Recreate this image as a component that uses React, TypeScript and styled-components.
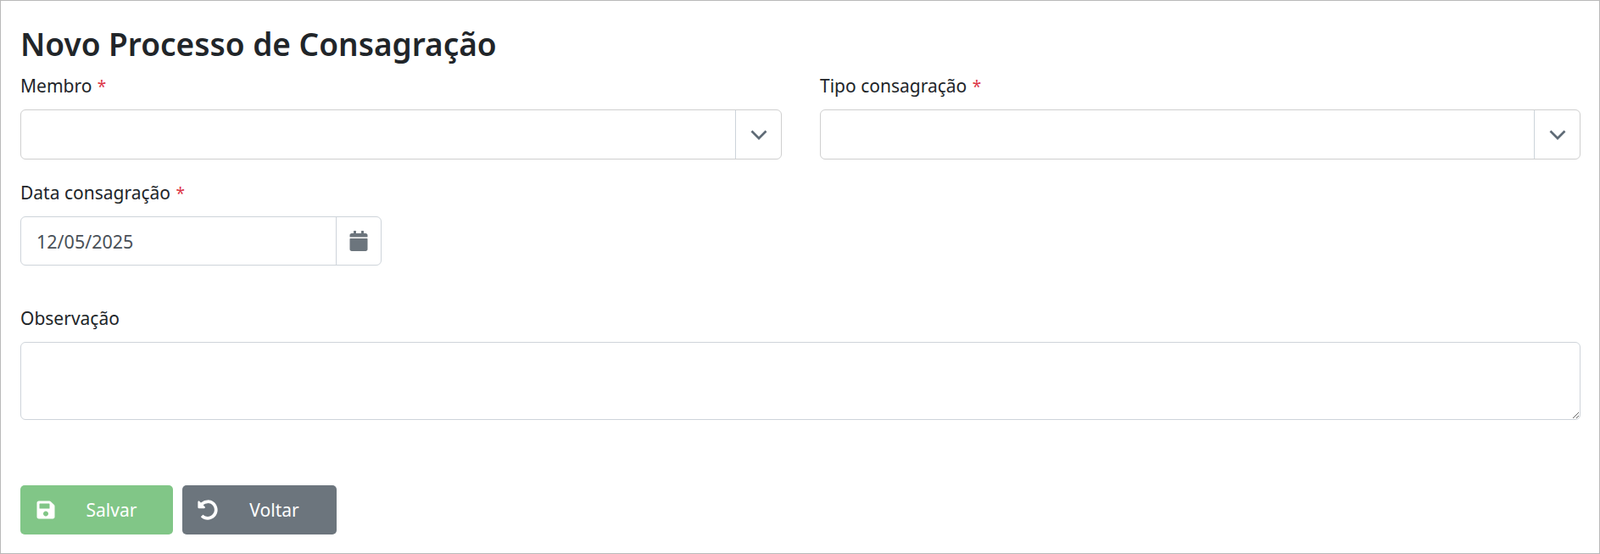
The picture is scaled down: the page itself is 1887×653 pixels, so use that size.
// App.tsx
import * as React from 'react';
import styled, { createGlobalStyle } from 'styled-components';
import { FaCalendar, FaSave, FaUndoAlt } from 'react-icons/fa';

const GlobalStyle = createGlobalStyle`
  * {
    box-sizing: border-box;
  }

  html,
  body {
    margin: 0;
    padding: 0;
    background: #fff;
  }

  body {
    font-family: 'Noto Sans', 'Open Sans', sans-serif;
    color: #212529;
  }
`;

const Page = styled.main`
  height: 653px;
  border: 1px solid #b9b9b9;
  padding: 30px 22px 0 23px;
`;

const Title = styled.h1`
  margin: 0;
  font-size: 37px;
  line-height: 41px;
  font-weight: 600;
  color: #212529;
`;

const TwoColumns = styled.div`
  display: grid;
  grid-template-columns: 898px 897px;
  justify-content: space-between;
  margin-top: 14px;
`;

const Field = styled.div<{ $width?: string; $top?: string }>`
  width: ${(p) => p.$width ?? 'auto'};
  margin-top: ${(p) => p.$top ?? '0'};
`;

const Label = styled.label`
  display: block;
  font-size: 21px;
  line-height: 30px;
  height: 30px;
  margin-bottom: 13px;
  color: #212529;
`;

const Required = styled.span`
  color: #dc3545;
  font-size: 19px;
  margin-left: 1px;
`;

const SelectBox = styled.div`
  display: flex;
  height: 59px;
  border: 1px solid #cfcfcf;
  border-radius: 6px;
  background: #fff;
`;

const SelectValue = styled.div`
  flex: 1;
`;

const SelectToggle = styled.div`
  width: 54px;
  display: flex;
  align-items: center;
  justify-content: center;
  border-left: 1px solid #ccd3da;
  color: #5f6b76;
`;

const DateBox = styled.div`
  display: flex;
  height: 58px;
  border: 1px solid #ced4da;
  border-radius: 6px;
  background: #fff;
`;

const DateInput = styled.input`
  flex: 1;
  min-width: 0;
  border: 0;
  outline: 0;
  background: transparent;
  padding: 0 18px;
  font-family: inherit;
  font-size: 21.5px;
  color: #495057;
`;

const DateButton = styled.div`
  width: 53px;
  display: flex;
  align-items: center;
  justify-content: center;
  border-left: 1px solid #ced4da;
  color: #6c757d;
  font-size: 24px;
`;

const TextArea = styled.textarea`
  display: block;
  width: 100%;
  height: 92px;
  border: 1px solid #ced4da;
  border-radius: 6px;
  outline: 0;
  padding: 8px 16px;
  font-family: inherit;
  font-size: 20px;
  color: #495057;
`;

const Actions = styled.div`
  display: flex;
  gap: 11px;
  margin-top: 77px;
`;

const ActionButton = styled.button<{ $bg: string; $width: string }>`
  display: flex;
  align-items: center;
  width: ${(p) => p.$width};
  height: 58px;
  padding: 0 18px;
  border: 0;
  border-radius: 5px;
  background: ${(p) => p.$bg};
  color: #fff;
  font-family: inherit;
  font-size: 21px;

  svg {
    font-size: 24px;
    flex: none;
  }

  span {
    flex: 1;
    text-align: center;
    padding-left: 11px;
  }
`;

const Chevron: React.FC = () => (
  <svg width="20" height="12" viewBox="0 0 20 12" fill="none" aria-hidden="true">
    <path d="M1.5 1.5 10 10l8.5-8.5" stroke="currentColor" strokeWidth="2.7" />
  </svg>
);

export default function App() {
  return (
    <>
      <GlobalStyle />
      <Page>
        <Title>Novo Processo de Consagração</Title>
        <TwoColumns>
          <Field>
            <Label>
              Membro <Required>*</Required>
            </Label>
            <SelectBox>
              <SelectValue />
              <SelectToggle>
                <Chevron />
              </SelectToggle>
            </SelectBox>
          </Field>
          <Field>
            <Label>
              Tipo consagração <Required>*</Required>
            </Label>
            <SelectBox>
              <SelectValue />
              <SelectToggle>
                <Chevron />
              </SelectToggle>
            </SelectBox>
          </Field>
        </TwoColumns>
        <Field $width="426px" $top="24px">
          <Label>
            Data consagração <Required>*</Required>
          </Label>
          <DateBox>
            <DateInput readOnly value="12/05/2025" />
            <DateButton>
              <FaCalendar />
            </DateButton>
          </DateBox>
        </Field>
        <Field $top="47px">
          <Label>Observação</Label>
          <TextArea />
        </Field>
        <Actions>
          <ActionButton $bg="#81c687" $width="180px">
            <FaSave />
            <span>Salvar</span>
          </ActionButton>
          <ActionButton $bg="#6c757d" $width="182px">
            <FaUndoAlt />
            <span>Voltar</span>
          </ActionButton>
        </Actions>
      </Page>
    </>
  );
}
